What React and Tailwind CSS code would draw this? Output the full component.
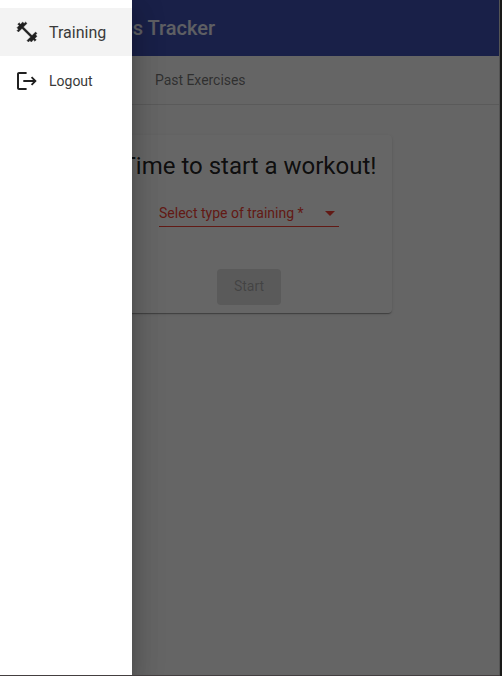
import React from "react";

function DumbbellIcon() {
  return (
    <svg viewBox="0 0 24 24" className="h-6 w-6 shrink-0 fill-[#202020] stroke-[#202020] stroke-[0.4]">
      <path d="M20.57 14.86L22 13.43 20.57 12 17 15.57 8.43 7 12 3.43 10.57 2 9.14 3.43 7.71 2 5.57 4.14 4.14 2.71 2.71 4.14l1.43 1.43L2 7.71l1.43 1.43L2 10.57 3.43 12 7 8.43 15.57 17 12 20.57 13.43 22l1.43-1.43L16.29 22l2.14-2.14 1.43 1.43 1.43-1.43-1.43-1.43L22 16.29z" />
    </svg>
  );
}

function LogoutIcon() {
  return (
    <svg viewBox="0 0 24 24" className="h-6 w-6 shrink-0 fill-[#202020]">
      <path d="M17.2 7.5l-1.3 1.3 2.2 2.2H8.3v2h9.8l-2.2 2.2 1.3 1.3 4.5-4.5zM4 5h7.6V3H4c-1.1 0-2 .9-2 2v14c0 1.1.9 2 2 2h7.6v-2H4z" />
    </svg>
  );
}

function TrainingPage() {
  return (
    <div className="flex h-full w-[499px] flex-col bg-[#fcfcfc]">
      <header className="flex h-14 shrink-0 items-center bg-[#3f51b5] pl-[69px] text-[20px] font-medium text-white/90">
        <span className="w-[146px] text-right whitespace-nowrap">Fitness Tracker</span>
      </header>
      <nav className="flex h-[49px] shrink-0 items-center border-b border-[#e0e0e0] pl-[155px] text-sm text-black/55">
        <span className="tracking-[-0.04px]">Past Exercises</span>
      </nav>
      <main className="flex justify-center pt-[30px]">
        <section className="mr-[1px] flex h-[178px] w-[286px] flex-col items-center rounded bg-white pt-[15px] shadow-[0_2px_1px_-1px_rgba(0,0,0,0.2),0_1px_1px_0_rgba(0,0,0,0.14),0_1px_3px_0_rgba(0,0,0,0.12)]">
          <h1 className="text-2xl leading-8 whitespace-nowrap text-black/87">Time to start a workout!</h1>
          <div className="mt-[19px] flex h-[26px] w-[180px] justify-between border-b border-[#f44336] text-sm leading-6 text-[#f44336]">
            <span>Select type of training *</span>
            <svg viewBox="0 0 10 5" className="mt-[10px] mr-1 h-[5px] w-[10px] fill-current">
              <path d="M0 0h10L5 5z" />
            </svg>
          </div>
          <button className="mt-[42px] h-9 w-16 rounded bg-black/12 pb-[2px] text-sm text-black/26">Start</button>
        </section>
      </main>
    </div>
  );
}

export default function App() {
  return (
    <div className="relative h-[676px] w-[502px] overflow-hidden bg-[#191918] font-['Roboto','Liberation_Sans',sans-serif]">
      <div className="h-[675px] w-[500px] border-r border-[#555]">
        <TrainingPage />
      </div>
      <div className="h-px w-[500px] bg-[#443f40]" />
      <div className="absolute top-0 left-0 h-[675px] w-[499px] overflow-hidden bg-black/60">
        <aside className="h-full w-[132px] bg-white pt-2 text-[#3a3a3a] shadow-[0_8px_10px_-5px_rgba(0,0,0,0.2),0_16px_24px_2px_rgba(0,0,0,0.14),0_6px_30px_5px_rgba(0,0,0,0.12)]">
          <a className="flex h-12 items-center gap-[10px] bg-[#f3f3f3] pl-[15px] text-base">
            <DumbbellIcon />
            <span className="pt-[2px]">Training</span>
          </a>
          <a className="flex h-[50px] items-center gap-[10px] pl-[15px] text-sm">
            <LogoutIcon />
            <span>Logout</span>
          </a>
        </aside>
      </div>
    </div>
  );
}
